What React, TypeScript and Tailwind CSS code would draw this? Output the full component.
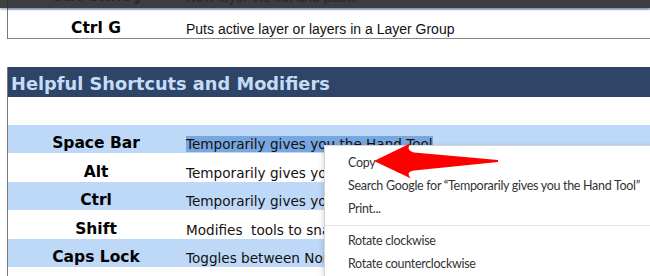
import React from 'react';

const rows = [
  { key: 'Space Bar', desc: 'Temporarily gives you the Hand Tool', blue: true, selected: true },
  { key: 'Alt', desc: 'Temporarily gives you the Eyedropper Tool', blue: false },
  { key: 'Ctrl', desc: 'Temporarily gives you the Move Tool', blue: true },
  { key: 'Shift', desc: 'Modifies  tools to snap to angles', blue: false },
  { key: 'Caps Lock', desc: 'Toggles between Normal and Precise cursors', blue: true },
];

const menuItems = ['Copy', 'Search Google for \u201cTemporarily gives you the Hand Tool\u201d', 'Print...'];
const menuItems2 = ['Rotate clockwise', 'Rotate counterclockwise'];

const Row: React.FC<{ k: string; desc: string; blue?: boolean; selected?: boolean }> = ({ k, desc, blue, selected }) => (
  <div className={`flex h-[28.5px] items-end pb-[1px] ${blue ? 'bg-[#bed8f8]' : 'bg-white'}`}>
    <div className="w-[176px] shrink-0 text-center font-['DejaVu_Sans',sans-serif] text-[15.5px] font-bold leading-[18px] text-black">
      {k}
    </div>
    <div className="whitespace-pre pl-[2px] font-['DejaVu_Sans',sans-serif] text-[13.6px] leading-[16px] text-[#111]">
      {selected ? <span className="bg-[#78a6df]">{desc}</span> : desc}
    </div>
  </div>
);

export default function App() {
  return (
    <div className="relative h-[276px] w-[650px] overflow-hidden bg-white">
      <div className="absolute left-0 right-0 top-0 z-10 h-[8px] bg-[#2b2c2e]/90 shadow-[0_1px_3px_rgba(0,0,0,0.45)]" />

      {/* top, partly hidden rows */}
      <div className="ml-[7px] border-l border-[#777] pt-px">
        <div className="-mt-[19px] flex h-[28px] items-end bg-[#bed8f8] pb-[5px]">
          <div className="w-[176px] text-center font-['DejaVu_Sans',sans-serif] text-[15.5px] font-bold leading-[18px]">Ctrl Shift J</div>
          <div className="pl-[2px] font-['Liberation_Sans',sans-serif] text-[14px] leading-[16px]">New layer via cut and paste</div>
        </div>
        <div className="flex h-[28.5px] items-end border-b border-[#888] pb-[1px]">
          <div className="w-[176px] text-center font-['DejaVu_Sans',sans-serif] text-[15.5px] font-bold leading-[18px]">Ctrl G</div>
          <div className="pl-[2px] font-['Liberation_Sans',sans-serif] text-[14px] leading-[16px] text-[#111]">
            Puts active layer or layers in a Layer Group
          </div>
        </div>
      </div>

      <div className="h-[28px]" />

      <div className="ml-[7px] border-l border-[#777]">
        <div className="flex h-[30px] items-center bg-[#2e4567] pl-[3px] pt-[4px]">
          <span className="font-['DejaVu_Sans',sans-serif] text-[17.8px] font-bold leading-[20px] text-[#c5dcf7]">
            Helpful Shortcuts and Modifiers
          </span>
        </div>
        <div className="h-[28px] bg-white" />
        {rows.map((r) => (
          <Row key={r.key} k={r.key} desc={r.desc} blue={r.blue} selected={r.selected} />
        ))}
        <div className="h-[20px] bg-white" />
      </div>

      {/* context menu */}
      <div className="absolute left-[324px] top-[145px] z-20 w-[340px] border-l border-t border-[#d6d6d6] bg-white pt-[6px] shadow-[0_2px_6px_rgba(0,0,0,0.2)]">
        {menuItems.map((m) => (
          <div key={m} className="flex h-[23px] items-center whitespace-nowrap pl-[23px] font-['Lato',sans-serif] text-[12.5px] tracking-[-0.3px] text-[#333]">
            {m}
          </div>
        ))}
        <div className="my-[4px] h-px bg-[#e3e3e3]" />
        {menuItems2.map((m) => (
          <div key={m} className="flex h-[23px] items-center whitespace-nowrap pl-[23px] font-['Lato',sans-serif] text-[12.5px] tracking-[-0.3px] text-[#333]">
            {m}
          </div>
        ))}
      </div>

      {/* red arrow */}
      <svg className="absolute left-0 top-0 z-30" width="650" height="276" viewBox="0 0 650 276">
        <path d="M374 161 L411 143 Q405 150 414 152.5 L498 160 L498 162 L414 170.5 Q405 172 411 178.5 Z" fill="#ff0000" />
      </svg>
    </div>
  );
}
